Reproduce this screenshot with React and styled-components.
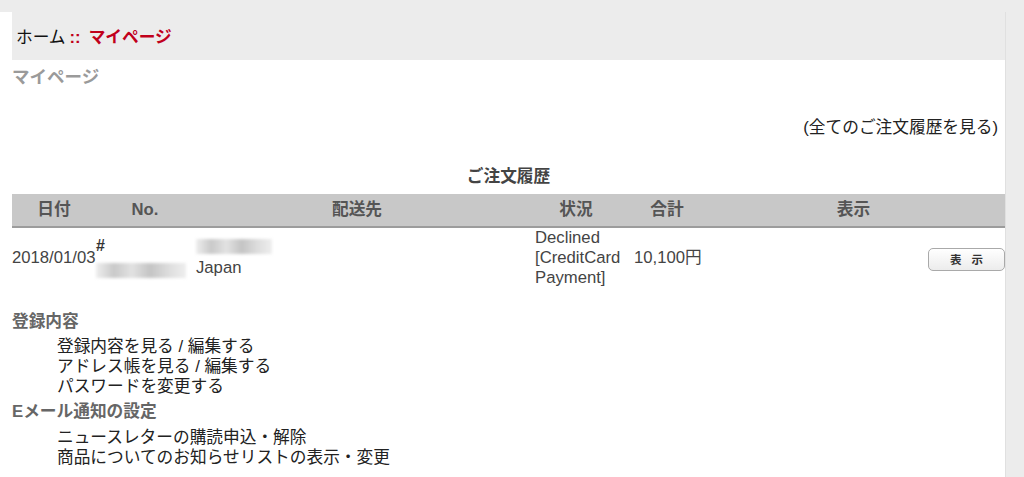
import React from "react";
import styled, { createGlobalStyle } from "styled-components";

const colors = {
  pageBg: "#ececec",
  panel: "#ffffff",
  red: "#c1001b",
  text: "#333333",
  title: "#9a9a9a",
  heading: "#666666",
  thBg: "#c8c8c8",
  thText: "#555555",
  thLine: "#9c9c9c",
};

const GlobalStyle = createGlobalStyle`
  body {
    margin: 0;
    background: ${colors.pageBg};
    font-family: "Liberation Sans", "Noto Sans CJK JP", sans-serif;
    font-size: 16.7px;
    line-height: 20px;
    color: ${colors.text};
  }
`;

const Page = styled.div`
  width: 1005px;
  min-height: calc(100vh - 12px);
  margin-top: 12px;
  background: ${colors.panel};
  box-shadow: 1px 0 0 #e0e0e0;
`;

const Breadcrumb = styled.div`
  margin-left: 12px;
  height: 48px;
  padding: 4px 0 0 4px;
  box-sizing: border-box;
  display: flex;
  align-items: center;
  background: ${colors.pageBg};
  color: #111;
`;

const Sep = styled.span`
  color: ${colors.red};
  font-weight: 700;
  margin: 0 8px 0 4px;
`;

const Current = styled.span`
  color: ${colors.red};
  font-weight: 700;
`;

const Content = styled.div`
  padding: 0 0 0 12px;
`;

const Title = styled.h1`
  margin: 7px 0 0;
  font-size: 17.5px;
  line-height: 20px;
  font-weight: 700;
  color: ${colors.title};
`;

const AllLink = styled.div`
  margin-top: 31px;
  padding-right: 7px;
  text-align: right;
  color: #222;
`;

const Caption = styled.div`
  margin: 29px 0 7px;
  text-align: center;
  font-weight: 700;
  color: #444;
`;

const Table = styled.table`
  width: 993px;
  border-collapse: collapse;
  table-layout: fixed;
`;

const Th = styled.th`
  height: 32px;
  padding: 0;
  background: ${colors.thBg};
  border-bottom: 2px solid ${colors.thLine};
  color: ${colors.thText};
  font-weight: 700;
  text-align: center;
`;

const Td = styled.td`
  padding: 0 0 2px ${(p) => p.$pad || 0}px;
  vertical-align: middle;
  text-align: ${(p) => p.$align || "left"};
  color: #444;
`;

const Hash = styled.span`
  display: block;
  height: 16px;
  font-size: 16px;
  font-weight: 700;
  line-height: 14px;
  color: #333;
`;

const Blur = styled.span`
  display: inline-block;
  width: ${(p) => p.$w}px;
  height: 15px;
  vertical-align: middle;
  background: linear-gradient(90deg, #eee, #c9c9c9 20%, #e2e2e2 40%, #c4c4c4 60%, #dcdcdc 80%, #eee);
  filter: blur(1.5px);
`;

const CellLines = styled.div`
  display: flex;
  flex-direction: column;
  gap: ${(p) => p.$gap || 4}px;
`;

const ViewButton = styled.button`
  width: 77px;
  height: 23px;
  margin-top: 2px;
  border: 1px solid #a9a9a9;
  border-radius: 5px;
  background: linear-gradient(#ffffff, #ececec);
  font-family: inherit;
  font-size: 11.5px;
  font-weight: 700;
  color: #333;
  letter-spacing: 10px;
  padding: 0 0 0 10px;
`;

const SectionHead = styled.div`
  margin-top: ${(p) => p.$top}px;
  font-weight: 700;
  color: ${colors.heading};
`;

const LinkList = styled.ul`
  list-style: none;
  margin: ${(p) => p.$top}px 0 0;
  padding-left: 45px;
  color: #222;
`;

const orders = [
  {
    date: "2018/01/03",
    status: "Declined [CreditCard Payment]",
    total: "10,100円",
  },
];

export default function App() {
  return (
    <>
      <GlobalStyle />
      <Page>
        <Breadcrumb>
          ホーム<Sep>::</Sep>
          <Current>マイページ</Current>
        </Breadcrumb>
        <Content>
          <Title>マイページ</Title>
          <AllLink>(全てのご注文履歴を見る)</AllLink>
          <Caption>ご注文履歴</Caption>
          <Table>
            <colgroup>
              <col style={{ width: 84 }} />
              <col style={{ width: 98 }} />
              <col style={{ width: 326 }} />
              <col style={{ width: 112 }} />
              <col style={{ width: 70 }} />
              <col />
            </colgroup>
            <thead>
              <tr>
                <Th>日付</Th>
                <Th>No.</Th>
                <Th>配送先</Th>
                <Th>状況</Th>
                <Th>合計</Th>
                <Th>表示</Th>
              </tr>
            </thead>
            <tbody>
              {orders.map((o) => (
                <tr key={o.date}>
                  <Td>{o.date}</Td>
                  <Td>
                    <CellLines $gap={8}>
                      <Hash>#</Hash>
                      <Blur $w={90} />
                    </CellLines>
                  </Td>
                  <Td $pad={2}>
                    <CellLines>
                      <Blur $w={76} />
                      <span>Japan</span>
                    </CellLines>
                  </Td>
                  <Td $pad={15}>{o.status}</Td>
                  <Td $pad={2}>{o.total}</Td>
                  <Td $align="right">
                    <ViewButton>表示</ViewButton>
                  </Td>
                </tr>
              ))}
            </tbody>
          </Table>
          <SectionHead $top={22}>登録内容</SectionHead>
          <LinkList $top={5}>
            <li>登録内容を見る / 編集する</li>
            <li>アドレス帳を見る / 編集する</li>
            <li>パスワードを変更する</li>
          </LinkList>
          <SectionHead $top={5}>Eメール通知の設定</SectionHead>
          <LinkList $top={6}>
            <li>ニュースレターの購読申込・解除</li>
            <li>商品についてのお知らせリストの表示・変更</li>
          </LinkList>
        </Content>
      </Page>
    </>
  );
}
